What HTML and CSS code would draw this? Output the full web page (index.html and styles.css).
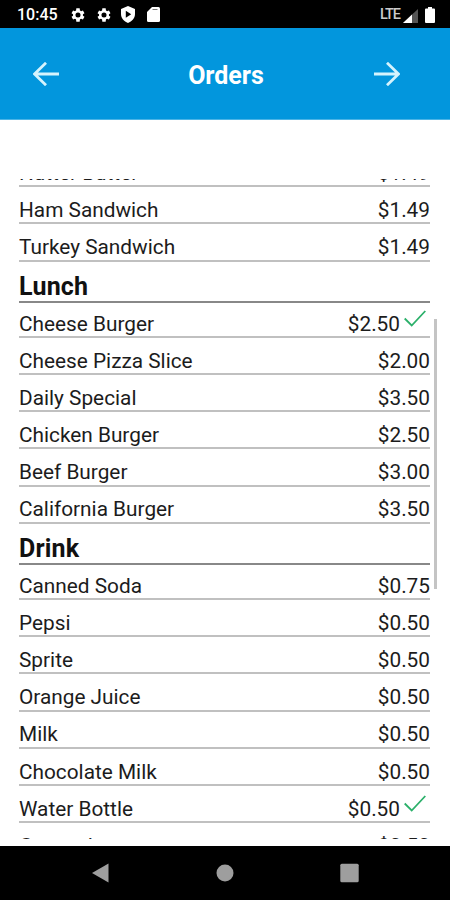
FILE: index.html
```html
<!DOCTYPE html>
<html>
	<head>
		<meta charset="UTF-8">
		<meta name="viewport" content="width=device-width,initial-scale=1">
		<title>Orders</title>
		<link rel="stylesheet" href="styles.css">
	</head>
	<body>
		<div id="wrap">
			<div class="status">
				<span class="time">10:45</span>
				<svg class="gear" width="16" height="16" viewBox="0 0 24 24"><path fill="#fff" fill-rule="evenodd" d="M19.4 13a7.500 7.500 0 0 0 0-2l2.300-1.800-2.300-4-2.800 1.100a7.500 7.500 0 0 0-1.700-1L14.500 2h-5l-.4 3.300a7.500 7.500 0 0 0-1.700 1L4.600 5.200l-2.300 4L4.600 11a7.500 7.500 0 0 0 0 2l-2.300 1.800 2.300 4 2.800-1.100a7.500 7.500 0 0 0 1.700 1l.4 3.300h5l.4-3.300a7.500 7.500 0 0 0 1.700-1l2.800 1.100 2.300-4zM12 15.800a3.800 3.800 0 1 1 0-7.600 3.800 3.800 0 0 1 0 7.600z"/></svg>
				<svg class="gear" width="16" height="16" viewBox="0 0 24 24"><path fill="#fff" fill-rule="evenodd" d="M19.4 13a7.500 7.500 0 0 0 0-2l2.300-1.800-2.300-4-2.800 1.100a7.500 7.500 0 0 0-1.700-1L14.500 2h-5l-.4 3.300a7.500 7.500 0 0 0-1.700 1L4.600 5.200l-2.300 4L4.600 11a7.500 7.500 0 0 0 0 2l-2.300 1.800 2.300 4 2.800-1.100a7.500 7.500 0 0 0 1.700 1l.4 3.300h5l.4-3.300a7.500 7.500 0 0 0 1.700-1l2.800 1.100 2.300-4zM12 15.800a3.800 3.800 0 1 1 0-7.600 3.800 3.800 0 0 1 0 7.600z"/></svg>
				<svg class="shield" width="14" height="17" viewBox="0 0 14 17"><path fill="#fff" fill-rule="evenodd" d="M7 0l7 3v5c0 4-3 7.500-7 9-4-1.500-7-5-7-9V3zM4.800 4.700v7l5.400-3.500z"/></svg>
				<svg class="card" width="13" height="15" viewBox="0 0 13 15"><path fill="#fff" d="M5 0h6.500Q13 0 13 1.500v12q0 1.500-1.500 1.500h-10Q0 15 0 13.500V5z"/><path stroke="#777" stroke-width="1" d="M5.500 2.500h5"/></svg>
				<span class="lte">LTE</span>
				<svg class="signal" width="15" height="14" viewBox="0 0 15 14"><path fill="#555" d="M15 0v14H0z"/><path fill="#fff" d="M9 5.600V14H0z"/></svg>
				<svg class="battery" width="10" height="16" viewBox="0 0 10 16"><path fill="#fff" d="M3 0h4v1.500h2q1 0 1 1V15q0 1-1 1H1q-1 0-1-1V2.500q0-1 1-1h2z"/></svg>
			</div>
			<div class="header">
				<svg width="26" height="24" viewBox="0 0 26 24"><path d="M26 12H1.500M13 .8L1.500 12 13 23.200"/></svg>
				<h1>Orders</h1>
				<svg width="26" height="24" viewBox="0 0 26 24"><path d="M0 12h24.500M13 .8L24.500 12 13 23.200"/></svg>
			</div>
			<div class="content">
				<div class="list">
					<ul>
						<li><span>Nutter Butter</span><b>$1.49</b></li>
						<li><span>Ham Sandwich</span><b>$1.49</b></li>
						<li><span>Turkey Sandwich</span><b>$1.49</b></li>
					</ul>
					<h2>Lunch</h2>
					<ul>
						<li class="first"><span>Cheese Burger</span><b>$2.50</b><svg class="check" width="22" height="17" viewBox="0 0 22 17"><path d="M.7 8.500l7 7L21.300 1"/></svg></li>
						<li><span>Cheese Pizza Slice</span><b>$2.00</b></li>
						<li><span>Daily Special</span><b>$3.50</b></li>
						<li><span>Chicken Burger</span><b>$2.50</b></li>
						<li><span>Beef Burger</span><b>$3.00</b></li>
						<li><span>California Burger</span><b>$3.50</b></li>
					</ul>
					<h2>Drink</h2>
					<ul>
						<li class="first"><span>Canned Soda</span><b>$0.75</b></li>
						<li><span>Pepsi</span><b>$0.50</b></li>
						<li><span>Sprite</span><b>$0.50</b></li>
						<li><span>Orange Juice</span><b>$0.50</b></li>
						<li><span>Milk</span><b>$0.50</b></li>
						<li><span>Chocolate Milk</span><b>$0.50</b></li>
						<li><span>Water Bottle</span><b>$0.50</b><svg class="check" width="22" height="17" viewBox="0 0 22 17"><path d="M.7 8.500l7 7L21.300 1"/></svg></li>
						<li><span>Gatorade</span><b>$0.50</b></li>
					</ul>
				</div>
				<div class="scroll"></div>
			</div>
			<div class="nav">
				<svg width="18" height="20" viewBox="0 0 18 20"><path d="M17.500 .5v19L1 10z"/></svg>
				<svg width="18" height="20" viewBox="0 0 18 20"><circle cx="9" cy="10" r="8.500"/></svg>
				<svg width="19" height="20" viewBox="0 0 19 20"><rect x=".3" y=".8" width="18.400" height="18.400" rx="1.500"/></svg>
			</div>
		</div>
	</body>
</html>
```
FILE: styles.css
```css
*{margin: 0;padding: 0;box-sizing: border-box;}
li{list-style: none;}
svg{display: block;flex: none;}
body{background: #fff;font-family: Roboto,sans-serif;color: #1c1c1c;}
#wrap{width: 450px;height: 900px;display: flex;flex-direction: column;overflow: hidden;}

.status{height: 28px;flex: none;display: flex;align-items: center;padding: 1px 15px 0 17px;background: #000;color: #fff;}
.time{width: 53px;font-size: 16px;font-weight: 500;}
.gear{margin-right: 10px;}
.shield{margin: 0 12px 0 -1px;}
.lte{margin-left: auto;font-size: 14.500px;font-weight: 500;letter-spacing: -1px;color: #ccc;}
.signal{margin: 2px 7px 0 3px;}

.header{height: 92px;flex: none;display: flex;align-items: center;justify-content: space-between;padding: 0 50px 0 33px;background: #0296dd;border-bottom: 1px solid #4bb4e6;}
.header svg{fill: none;stroke: #d5f3fd;stroke-width: 2.800;}
.header h1{font-size: 25px;font-weight: 700;color: #fff;padding: 3px 0 0 19px;}

.content{flex: 1;display: flex;padding: 59px 12px 7px 19px;background: #fff;}
.list{width: 411px;height: 660px;overflow: hidden;}
.list ul:first-child{margin-top: -28.900px;}
.list li{height: 37.150px;display: flex;align-items: flex-end;padding-bottom: .4px;border-bottom: 2px solid #c0c0c0;font-size: 20.800px;line-height: 24px;}
.list li.first{height: 35.300px;}
.list li b{margin-left: auto;font-weight: 400;}
.list h2{height: 41.200px;padding-top: 11px;border-bottom: 2px solid #888;color: #111;font-size: 25px;line-height: 28px;font-weight: 700;letter-spacing: .2px;}
.check{margin: 0 4px 9px 4px;fill: none;stroke: #2bb06a;stroke-width: 1.800;}
.scroll{width: 3px;height: 270px;margin: 140px 0 0 4px;background: #c4c4c4;}

.nav{height: 54px;flex: none;display: flex;align-items: center;justify-content: space-between;padding: 0 91px 0 91px;background: #000;}
.nav svg{fill: #9e9e9e;}
```
